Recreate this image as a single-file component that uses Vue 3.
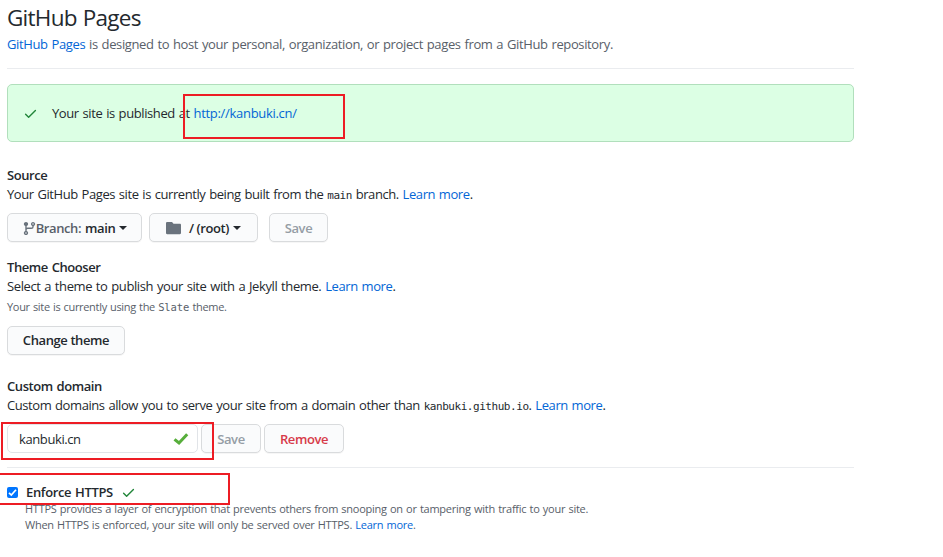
<script setup>
const octicons = {
  check: 'M13.78 4.22a.75.75 0 010 1.06l-7.25 7.25a.75.75 0 01-1.06 0L2.22 9.28a.75.75 0 011.06-1.06L6 10.94l6.72-6.72a.75.75 0 011.06 0z',
  branch: 'M11.75 2.5a.75.75 0 100 1.5.75.75 0 000-1.5zm-2.25.75a2.25 2.25 0 113 2.122V6A2.5 2.5 0 0110 8.5H6a1 1 0 00-1 1v1.128a2.251 2.251 0 11-1.5 0V5.372a2.25 2.25 0 111.5 0v1.836A2.492 2.492 0 016 7h4a1 1 0 001-1v-.628A2.25 2.25 0 019.5 3.25zM4.25 12a.75.75 0 100 1.5.75.75 0 000-1.5zM3.5 3.25a.75.75 0 111.5 0 .75.75 0 01-1.5 0z',
  folder: 'M1.2 1A1.2 1.2 0 000 2.2v11.6C0 14.5.5 15 1.2 15h13.6c.7 0 1.2-.5 1.2-1.2V4.2c0-.7-.5-1.2-1.2-1.2H8L6.7 1.5C6.400 1.150 6 1 5.500 1z'
}
</script>

<template>
  <main class="page">
    <h2 class="title">GitHub Pages</h2>
    <p class="lead"><a>GitHub Pages</a> is designed to host your personal, organization, or project pages from a GitHub repository.</p>
    <hr class="rule" />

    <div class="flash">
      <svg class="tick" width="15" height="15" viewBox="0 0 16 16"><path :d="octicons.check" /></svg>
      <p class="flash-text">Your site is published at <a>http://kanbuki.cn/</a></p>
      <span class="mark mark-url"></span>
    </div>

    <section class="source">
      <h3>Source</h3>
      <p class="body source-text">Your GitHub Pages site is currently being built from the <code>main</code> branch. <a>Learn more</a>.</p>
      <div class="actions">
        <button class="btn branch">
          <svg width="15" height="15" viewBox="0 0 16 16"><path :d="octicons.branch" /></svg><span class="muted">Branch:</span><span class="value">main</span><i class="caret"></i>
        </button>
        <button class="btn root">
          <svg width="15" height="14" viewBox="0 0 16 16" preserveAspectRatio="none"><path :d="octicons.folder" /></svg><span>/ (root)</span><i class="caret"></i>
        </button>
        <button class="btn save" disabled>Save</button>
      </div>
    </section>

    <section class="theme">
      <h3>Theme Chooser</h3>
      <p class="body theme-text">Select a theme to publish your site with a Jekyll theme. <a>Learn more</a>.</p>
      <p class="note theme-note">Your site is currently using the <code>Slate</code> theme.</p>
      <button class="btn change">Change theme</button>
    </section>

    <section class="domain">
      <h3>Custom domain</h3>
      <p class="body domain-text">Custom domains allow you to serve your site from a domain other than <code>kanbuki.github.io</code>. <a>Learn more</a>.</p>
      <div class="domain-row">
        <div class="field">
          <span>kanbuki.cn</span>
          <svg width="16" height="14" viewBox="0 0 16 14"><path d="M1.5 7.3 6 11 14.2 2.2" /></svg>
        </div>
        <button class="btn save" disabled>Save</button>
        <button class="btn remove">Remove</button>
        <span class="mark mark-domain"></span>
      </div>
    </section>

    <hr class="rule" />

    <section class="https">
      <div class="https-head">
        <span class="box"><svg width="11" height="11" viewBox="0 0 11 11"><path d="M2 5.8 4.3 8 9 2.7" /></svg></span>
        <strong>Enforce HTTPS</strong>
        <svg class="tick" width="15" height="15" viewBox="0 0 16 16"><path :d="octicons.check" /></svg>
        <span class="mark mark-https"></span>
      </div>
      <p class="note https-one">HTTPS provides a layer of encryption that prevents others from snooping on or tampering with traffic to your site.</p>
      <p class="note https-two">When HTTPS is enforced, your site will only be served over HTTPS. <a>Learn more</a>.</p>
    </section>
  </main>
</template>

<style>
body { background: #fff; overflow: hidden; }
</style>

<style scoped>
* { box-sizing: border-box; margin: 0; }
.page {
  width: 854px;
  height: 557px;
  padding-left: 7px;
  color: #24292e;
  font: 13px/20px "Open Sans", "Noto Sans", sans-serif;
  letter-spacing: -0.42px;
  word-spacing: 0.8px;
  white-space: nowrap;
}
a { color: #0366d6; }
svg { display: block; flex: none; fill: currentColor; }
code { font: 11px/1 "DejaVu Sans Mono", monospace; letter-spacing: -0.45px; }
.title { height: 34px; font-size: 22.5px; line-height: 36px; font-weight: 400; letter-spacing: -0.75px; word-spacing: 1px; }
.lead { height: 34px; color: #586069; letter-spacing: -0.37px; }
.rule { border: 0; height: 1px; background: #eaecef; }
.flash {
  position: relative;
  display: flex;
  align-items: center;
  height: 58px;
  margin-top: 15px;
  padding-left: 15px;
  border: 1px solid #b1dfbc;
  border-radius: 5px;
  background: #dcffe4;
}
.tick { color: #22863a; }
.flash-text { margin-left: 14px; letter-spacing: -0.4px; }
.flash-text a { letter-spacing: -0.3px; }
.mark { position: absolute; border: 2px solid #ed1c24; pointer-events: none; }
.mark-url { left: 175px; top: 9px; width: 162px; height: 45px; }
h3 { font-size: 13px; line-height: 20px; font-weight: 600; letter-spacing: -0.42px; height: 19px; }
.body { height: 20px; }
.theme-text { letter-spacing: -0.4px; }
.source { margin-top: 23px; }
.actions { display: flex; margin-top: 9px; }
.btn {
  display: flex;
  align-items: center;
  justify-content: center;
  height: 29px;
  padding: 1px 0 0;
  border: 1px solid #d9dbdd;
  border-radius: 5px;
  background: #fafbfc;
  box-shadow: 0 1px 0 rgba(27, 31, 35, 0.04);
  color: #24292e;
  font: 600 13px/20px "Open Sans", "Noto Sans", sans-serif;
  letter-spacing: -0.4px;
}
.btn:disabled { color: #959da5; }
.caret { border: 4px solid transparent; border-top-color: currentColor; border-bottom: 0; margin-left: 4px; }
.btn svg { color: #6a737d; }
.branch { width: 135px; }
.branch svg { margin-right: -1px; }
.branch .muted { color: #586069; }
.value { margin-left: 4px; }
.root { width: 109px; margin-left: 7px; }
.root span { margin-left: 8px; }
.save { width: 59px; }
.actions .save { margin-left: 11px; }
.theme { margin-top: 15px; }
.note { font-size: 11px; line-height: 16px; color: #586069; letter-spacing: -0.25px; word-spacing: 0.6px; }
.note code { font-size: 10.5px; letter-spacing: -0.1px; }
.theme-note { margin-top: 3px; letter-spacing: -0.31px; }
.change { width: 118px; margin-top: 11px; padding: 0 0 1px; }
.domain { margin-top: 21px; }
.domain-row { position: relative; display: flex; height: 29px; margin-top: 9px; }
.field {
  display: flex;
  align-items: center;
  justify-content: space-between;
  width: 191px;
  padding: 1px 8px 0 11px;
  border: 1px solid #e1e4e8;
  border-radius: 5px;
  letter-spacing: -0.4px;
}
.field svg { fill: none; stroke: #57ae3b; stroke-width: 3; }
.domain-row .save { margin-left: 3px; width: 60px; }
.remove { width: 80px; margin-left: 3px; }
.btn.remove { color: #d73a49; }
.mark-domain { left: -6px; top: -2px; width: 213px; height: 38px; }
.domain + .rule { margin-top: 14px; }
.https { padding-top: 14px; }
.https-head { position: relative; display: flex; align-items: center; height: 20px; }
.box { width: 11px; height: 11px; border-radius: 2px; background: #0075ff; }
.box svg { fill: none; stroke: #fff; stroke-width: 1.7; }
.https-head strong { width: 88px; margin-left: 8px; font-weight: 600; letter-spacing: -0.36px; }
.https-head .tick { margin-left: 7px; }
.mark-https { left: -9px; top: -9px; width: 232px; height: 32px; }
.https .note { margin-left: 18px; }
.https-one { margin-top: -1px; }
</style>
